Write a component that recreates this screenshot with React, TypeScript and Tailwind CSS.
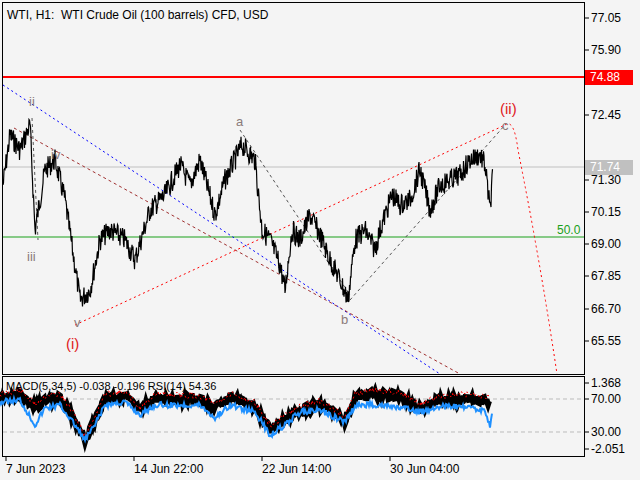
import React from 'react';

// key points of the price curve (x, y in chart pixels)
const keys: [number, number][] = [
  [3, 185], [10, 135], [20, 150], [30, 125], [35, 230], [45, 170], [55, 160], [65, 200], [80, 300], [90, 290],
  [100, 240], [110, 230], [125, 240], [135, 260], [150, 210], [165, 195], [180, 165], [190, 185], [200, 160],
  [215, 215], [225, 180], [242, 145], [255, 160], [262, 230], [270, 240], [280, 265], [285, 290], [292, 230],
  [300, 240], [310, 215], [320, 235], [330, 260], [340, 280], [348, 300], [355, 240], [365, 230], [375, 250],
  [380, 230], [392, 195], [400, 205], [410, 200], [420, 170], [430, 210], [440, 185], [460, 175], [470, 160],
  [480, 155], [485, 165], [490, 210], [493, 170],
];

function noisy(pts: [number, number][], amp: number, seed: number, step = 1) {
  let s = seed;
  const rnd = () => {
    s = (s * 9301 + 49297) % 233280;
    return s / 233280 - 0.5;
  };
  const out: string[] = [];
  for (let i = 0; i < pts.length - 1; i++) {
    const [x1, y1] = pts[i];
    const [x2, y2] = pts[i + 1];
    for (let x = x1; x < x2; x += step) {
      const t = (x - x1) / (x2 - x1);
      out.push(`${x},${(y1 + (y2 - y1) * t + rnd() * amp).toFixed(1)}`);
    }
  }
  return out.join(' ');
}

const price = noisy(keys, 22, 7, 0.5);

const axis = [
  ['77.05', 18], ['75.90', 50], ['72.45', 115], ['71.30', 180], ['70.15', 212], ['69.00', 244],
  ['67.85', 276], ['66.70', 309], ['65.55', 341],
] as const;

const histKeys: [number, number][] = [
  [0, 398], [20, 394], [35, 408], [45, 400], [60, 398], [75, 420], [85, 440], [95, 420], [105, 398], [125, 396],
  [140, 412], [155, 398], [200, 400], [215, 408], [230, 398], [255, 406], [270, 430], [285, 420], [300, 410],
  [320, 405], [345, 420], [355, 398], [370, 394], [400, 396], [420, 408], [440, 400], [470, 398], [490, 402],
];
const rsiKeys: [number, number][] = [
  [0, 402], [20, 400], [35, 425], [45, 408], [60, 405], [75, 425], [85, 440], [95, 425], [105, 405], [125, 402],
  [140, 415], [155, 405], [200, 405], [215, 418], [230, 405], [255, 412], [270, 435], [285, 425], [300, 412],
  [320, 410], [345, 422], [355, 406], [370, 404], [400, 408], [420, 412], [440, 406], [470, 408], [485, 410],
  [490, 428], [493, 405],
];

export default function App() {
  return (
    <div className="relative w-[640px] h-[480px] bg-[#f4f4f4] overflow-hidden text-black" style={{ fontFamily: '"Liberation Sans", Arial, sans-serif' }}>
      <svg width="640" height="480" className="absolute left-0 top-0">
        <rect x="2.5" y="2.5" width="582" height="372" fill="none" stroke="#000" />
        <rect x="2.5" y="376.5" width="582" height="80" fill="none" stroke="#000" />
        <line x1="3" y1="77" x2="584" y2="77" stroke="#ff0000" strokeWidth="2" />
        <line x1="3" y1="167" x2="584" y2="167" stroke="#c0c0c0" />
        <line x1="3" y1="237" x2="584" y2="237" stroke="#1aa01a" />
        <line x1="3" y1="85" x2="440" y2="374" stroke="#0000ff" strokeDasharray="2 3" />
        <line x1="14" y1="128" x2="460" y2="374" stroke="#a03030" strokeDasharray="3 3" />
        <line x1="75" y1="325" x2="505" y2="125" stroke="#ff0000" strokeDasharray="2 3" />
        <path d="M505 125 Q514 118 518 150 Q540 260 557 374" fill="none" stroke="#ff0000" strokeDasharray="2 3" />
        <line x1="350" y1="300" x2="505" y2="125" stroke="#555" strokeDasharray="3 3" />
        <line x1="240" y1="130" x2="350" y2="295" stroke="#555" strokeDasharray="3 3" />
        <line x1="32" y1="118" x2="38" y2="240" stroke="#555" strokeDasharray="3 3" />
        <polyline points={price} fill="none" stroke="#000" strokeWidth="1.2" />
        <line x1="3" y1="399" x2="584" y2="399" stroke="#bbb" strokeDasharray="4 3" />
        <line x1="3" y1="432" x2="584" y2="432" stroke="#bbb" strokeDasharray="4 3" />
        <polyline points={noisy(histKeys, 8, 3)} fill="none" stroke="#000" strokeWidth="6" />
        <polyline points={noisy(histKeys, 6, 11)} fill="none" stroke="#ff0000" strokeDasharray="2 3" transform="translate(0,-4)" />
        <polyline points={noisy(rsiKeys, 6, 5)} fill="none" stroke="#1e90ff" strokeWidth="2" />
        {axis.map(([, y]) => <line key={y} x1="584" y1={y} x2="589" y2={y} stroke="#000" />)}
        {[383, 399, 432, 449].map(y => <line key={y} x1="584" y1={y} x2="589" y2={y} stroke="#000" />)}
        {[2, 130, 258, 386].map(x => <line key={x} x1={x + 4} y1="457" x2={x + 4} y2="461" stroke="#000" />)}
      </svg>

      <div className="absolute left-[7px] top-[6px] text-[12px]">WTI, H1:&nbsp; WTI Crude Oil (100 barrels) CFD, USD</div>
      <div className="absolute left-[6px] top-[378px] text-[11px]">MACD(5,34,5) -0.038 -0.196 RSI(14) 54.36</div>

      {/* wave labels placed on the chart canvas */}
      <div className="absolute left-[29px] top-[92px] text-[13px] text-[#8a7a7a]">ii</div>
      <div className="absolute left-[51px] top-[145px] text-[13px] text-[#8a7a7a]">iv</div>
      <div className="absolute left-[27px] top-[247px] text-[13px] text-[#8a7a7a]">iii</div>
      <div className="absolute left-[74px] top-[313px] text-[13px] text-[#8a7a7a]">v</div>
      <div className="absolute left-[66px] top-[333px] text-[15px] text-[#e02020]">(i)</div>
      <div className="absolute left-[236px] top-[112px] text-[13px] text-[#8a7a7a]">a</div>
      <div className="absolute left-[341px] top-[310px] text-[13px] text-[#8a7a7a]">b</div>
      <div className="absolute left-[502px] top-[116px] text-[13px] text-[#8a7a7a]">c</div>
      <div className="absolute left-[500px] top-[98px] text-[15px] text-[#e02020]">(ii)</div>
      <div className="absolute left-[557px] top-[221px] text-[12px] text-[#1aa01a]">50.0</div>

      {/* price axis */}
      {axis.map(([t, y]) => (
        <div key={t} className="absolute left-[591px] text-[12px] leading-none" style={{ top: y - 6 }}>{t}</div>
      ))}
      <div className="absolute left-[585px] top-[70px] w-[48px] h-[15px] bg-[#ff0000] text-white text-[12px] leading-[15px] pl-[5px]">74.88</div>
      <div className="absolute left-[585px] top-[160px] w-[48px] h-[15px] bg-[#c0c0c0] text-white text-[12px] leading-[15px] pl-[5px]">71.74</div>
      {[['1.368', 383], ['70.00', 399], ['30.00', 432], ['-2.051', 449]].map(([t, y]) => (
        <div key={t} className="absolute left-[591px] text-[12px] leading-none" style={{ top: Number(y) - 6 }}>{t}</div>
      ))}

      {/* time axis */}
      <div className="absolute left-[6px] top-[460px] flex text-[12px]">
        {['7 Jun 2023', '14 Jun 22:00', '22 Jun 14:00', '30 Jun 04:00'].map(t => (
          <div key={t} className="w-[128px]">{t}</div>
        ))}
      </div>
    </div>
  );
}
